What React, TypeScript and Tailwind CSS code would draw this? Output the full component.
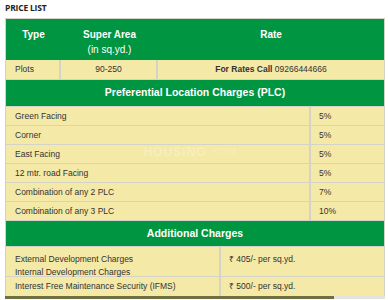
import React from "react";

const G = "bg-[#009540]";
const Y = "bg-[#f4e9a7]";

function PlcRow({ label, value }: { label: string; value: string }) {
  return (
    <div className="flex h-[18px] gap-[2px]">
      <div className={`${Y} w-[303px] pl-[9px] flex items-center`}>{label}</div>
      <div className={`${Y} flex-1 pl-[8px] flex items-center`}>{value}</div>
    </div>
  );
}

export default function App() {
  return (
    <div className="relative w-[388px] h-[300px] bg-white overflow-hidden font-['Liberation_Sans',Arial,sans-serif]">
      <div className="h-[18px] pl-[5px] pt-[3px] text-[8.5px] leading-[10px] font-bold text-[#222] font-['Open_Sans',sans-serif] tracking-[-0.2px]">
        PRICE LIST
      </div>
      <div className="ml-[5px] w-[380px] border-x border-t border-[#d3d3c8] bg-[#d3d3c8] flex flex-col gap-px text-[8.5px] text-[#333]">
        <div className={`${G} h-[41px] flex text-white text-[10px] font-bold leading-[15px] pt-[8px]`}>
          <div className="w-[55px] text-center">Type</div>
          <div className="w-[97px] text-center">
            Super Area
            <div className="font-normal">(in sq.yd.)</div>
          </div>
          <div className="flex-1 text-center">Rate</div>
        </div>
        <div className="flex h-[19px] gap-[2px] -mt-px">
          <div className={`${Y} w-[53px] pl-[9px] flex items-center`}>Plots</div>
          <div className={`${Y} w-[95px] flex items-center justify-center`}>90-250</div>
          <div className={`${Y} flex-1 flex items-center justify-center`}>
            <span className="font-bold">For Rates Call</span>&nbsp;09266444666
          </div>
        </div>
        <div className={`${G} h-[26px] flex items-center justify-center text-white text-[10.5px] font-bold`}>
          Preferential Location Charges (PLC)
        </div>
        <PlcRow label="Green Facing" value="5%" />
        <PlcRow label="Corner" value="5%" />
        <PlcRow label="East Facing" value="5%" />
        <PlcRow label="12 mtr. road Facing" value="5%" />
        <PlcRow label="Combination of any 2 PLC" value="7%" />
        <PlcRow label="Combination of any 3 PLC" value="10%" />
        <div className={`${G} h-[25px] flex items-center justify-center text-white text-[10.5px] font-bold`}>
          Additional Charges
        </div>
        <div className="flex h-[29px] gap-[2px]">
          <div className={`${Y} w-[213px] pl-[9px] pt-[6px] leading-[13px]`}>
            <div>External Development Charges</div>
            <div>Internal Development Charges</div>
          </div>
          <div className={`${Y} flex-1 pl-[8px] pt-[6px] leading-[13px]`}>₹ 405/- per sq.yd.</div>
        </div>
        <div className="flex h-[19px] gap-[2px]">
          <div className={`${Y} w-[213px] pl-[9px] flex items-center`}>Interest Free Maintenance Security (IFMS)</div>
          <div className={`${Y} flex-1 pl-[8px] flex items-center`}>₹ 500/- per sq.yd.</div>
        </div>
      </div>
      <div className="ml-[5px] w-[380px] h-[3px] flex">
        <div className="w-[329px] bg-[#6e7040]"></div>
        <div className="flex-1 bg-[#e4e4dc]"></div>
      </div>
      <div className="absolute left-[133px] top-[143px] text-[12px] font-bold text-white/25 tracking-[1px] flex items-center gap-[3px]">
        <span className="text-[11px]">⌂</span>
        <span>HOUSING</span>
        <span className="font-normal text-[9px]">.COM</span>
      </div>
    </div>
  );
}
